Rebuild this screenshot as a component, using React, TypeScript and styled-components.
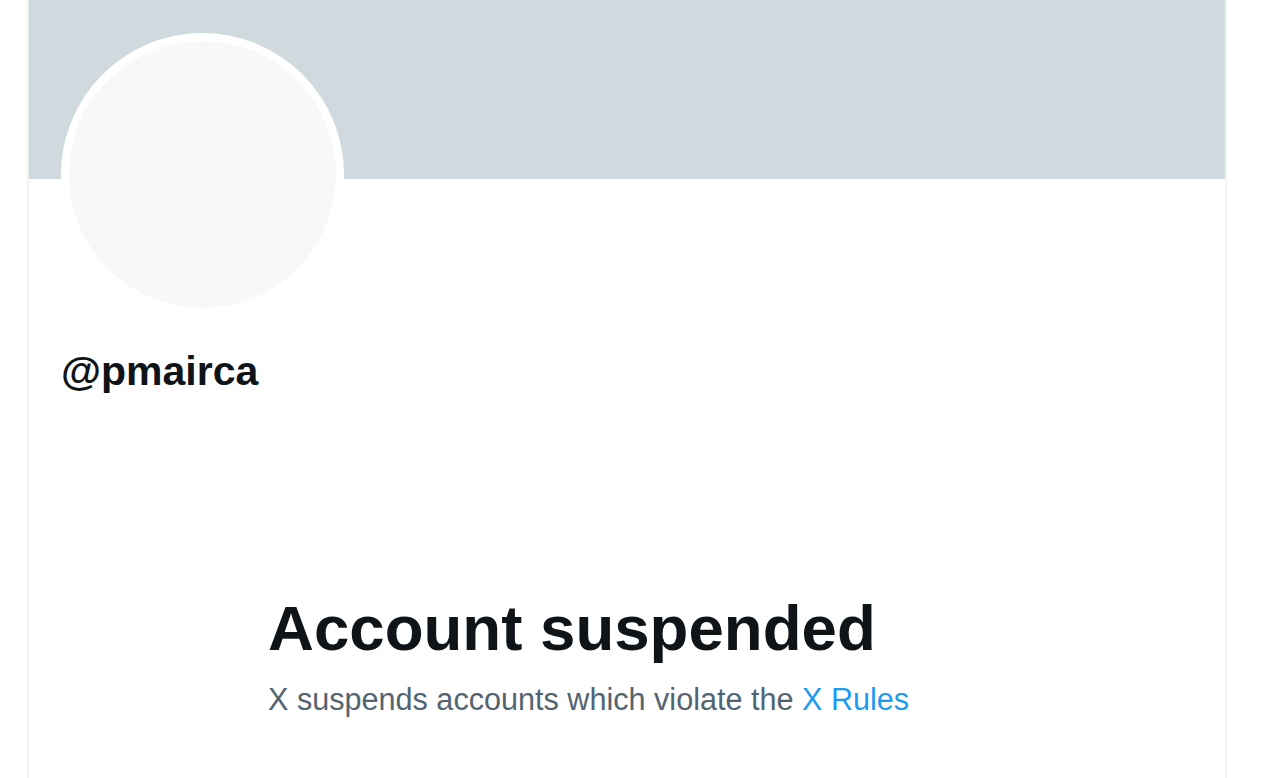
import React from "react";
import styled, { createGlobalStyle } from "styled-components";

const Global = createGlobalStyle`
  html, body {
    margin: 0;
    padding: 0;
    background: #ffffff;
    overflow: hidden;
  }
  body {
    font-family: "Liberation Sans", Arial, sans-serif;
  }
`;

const Column = styled.main`
  margin-left: 27px;
  width: 1196px;
  min-height: 778px;
  border-left: 2px solid #eff3f4;
  border-right: 2px solid #eff3f4;
  display: flex;
  flex-direction: column;
`;

const Banner = styled.div`
  height: 179px;
  background: #cfd9de;
`;

const Profile = styled.section`
  display: flex;
  flex-direction: column;
  align-items: flex-start;
  padding: 0 32px;
`;

const Avatar = styled.div`
  margin-top: -146px;
  width: 267px;
  height: 267px;
  border-radius: 50%;
  border: 8px solid #ffffff;
  background: #f7f9f9;
`;

const Handle = styled.h2`
  margin: 31px 0 0;
  font-size: 41px;
  line-height: 48px;
  font-weight: 700;
  color: #0f1419;
`;

const EmptyState = styled.section`
  display: flex;
  flex-direction: column;
  padding-left: 239px;
  margin-top: 195px;
  gap: 15px;
`;

const Title = styled.h1`
  margin: 0;
  font-size: 63.6px;
  line-height: 76px;
  font-weight: 700;
  color: #0f1419;
`;

const Subtitle = styled.p`
  margin: 0;
  font-size: 30.6px;
  line-height: 36px;
  color: #536471;
`;

const RulesLink = styled.a`
  color: #1d9bf0;
  text-decoration: none;
`;

export default function App() {
  return (
    <>
      <Global />
      <Column>
        <Banner />
        <Profile>
          <Avatar />
          <Handle>@pmairca</Handle>
        </Profile>
        <EmptyState>
          <Title>Account suspended</Title>
          <Subtitle>
            X suspends accounts which violate the <RulesLink href="#">X Rules</RulesLink>
          </Subtitle>
        </EmptyState>
      </Column>
    </>
  );
}
